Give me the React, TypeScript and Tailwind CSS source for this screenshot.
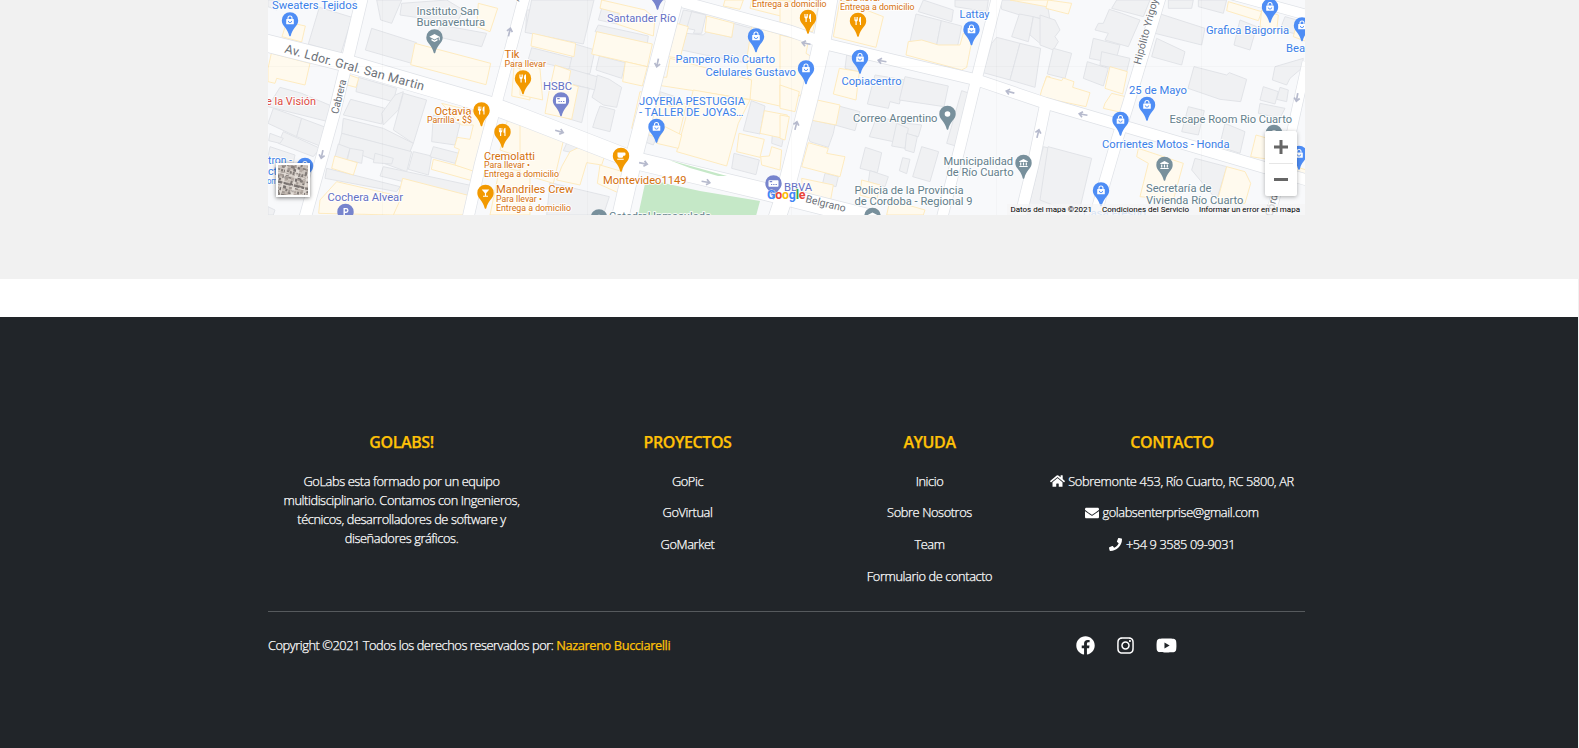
import React from "react";
import { FaHome, FaEnvelope, FaPhone, FaFacebook, FaInstagram, FaYoutube } from "react-icons/fa";

type Tile = { x: number; grey: string[]; yellow: string[] };

// City blocks, in thirds of a pixel from each tile's left edge.
const tiles: Tile[] = [
  {
    x: 260,
    grey: [
      "178,22 276,52 243,160 145,132",
      "24,0 58,0 50,30 24,20",
      "350,0 425,0 395,70 362,60",
      "335,85 470,128 455,190 316,150",
      "425,10 560,0 610,30 590,70 420,45",
      "540,75 680,100 665,140 530,110",
      "60,262 125,280 215,318 205,365 24,320",
      "40,325 125,355 110,410 24,370",
      "125,355 205,385 185,440 110,410",
      "70,395 180,445 160,470 55,430",
      "30,400 70,415 60,430 26,422",
      "30,440 105,465 100,490 24,470",
      "295,232 410,265 400,305 288,275",
      "272,298 375,325 365,372 250,345",
      "405,285 430,275 415,330 370,375 365,340",
      "430,280 500,300 460,430 400,390",
      "250,355 370,385 460,430 450,455 245,400",
      "520,345 600,372 585,435 515,425",
      "245,400 455,455 440,515 235,440",
      "235,432 270,445 260,480 225,470",
      "270,445 310,452 305,490 262,480",
      "345,460 400,475 395,492 340,488",
      "460,455 515,468 505,525 445,508",
      "520,440 597,460 585,490 510,470",
      "200,505 420,560 410,575 195,535",
      "370,500 650,560 640,590 430,545 360,528",
      "24,620 45,630 40,645 24,645",
      "800,30 810,30 810,98 797,95",
    ],
    yellow: [
      "80,66 136,78 125,126 66,110",
      "34,160 150,190 135,255 50,235 45,250 24,245 24,205",
      "465,130 692,190 678,254 452,194",
      "655,10 713,25 690,95 650,80",
      "240,215 296,235 288,262 235,248",
      "762,200 810,215 810,300 755,288",
      "224,468 292,488 280,525 215,505",
      "520,478 660,515 650,546 514,508",
      "545,310 705,350 660,520 585,495 598,448 583,442 592,412 630,418 640,375 604,375",
      "428,535 640,590 625,645 400,645",
      "180,600 230,545 425,590 400,645 176,640",
      "742,362 810,378 810,480 720,450",
      "720,500 810,520 810,645 690,645",
    ],
  },
  {
    x: 520,
    grey: [
      "35,0 222,0 190,132 15,97",
      "245,25 295,40 290,72 235,60",
      "235,75 385,108 382,130 225,95",
      "35,143 160,175 150,208 25,178",
      "165,132 225,150 210,220 145,235 150,195",
      "238,168 316,188 305,235 228,210",
      "145,205 238,232 225,270 140,248",
      "135,250 208,265 185,368 125,350",
      "232,225 268,238 305,262 290,322 250,315 216,292 225,265",
      "240,318 285,330 270,395 218,382 228,350",
      "490,30 555,42 545,92 477,76",
      "558,45 545,100 520,100 525,90 500,85 515,35",
      "640,70 695,85 685,190 555,165 485,150 500,100 550,105 560,95 635,112",
      "420,275 466,290 458,345 415,330",
      "435,330 465,350 460,378 425,370",
      "370,400 410,410 400,435 365,422",
      "694,302 735,318 720,402 670,392",
      "615,352 645,360 638,385 610,378",
      "642,460 718,480 708,524 635,505",
      "757,405 790,415 785,440 755,430",
      "140,430 180,440 165,460 130,452",
      "90,548 268,590 250,645 80,645",
    ],
    yellow: [
      "38,100 167,130 162,170 33,138",
      "245,0 375,30 405,55 400,108 290,72 300,40 240,25",
      "230,95 397,132 382,200 215,162",
      "316,185 382,200 367,258 308,245",
      "105,195 152,212 145,250 175,260 155,358 75,340 88,270",
      "0,185 60,205 68,300 0,285",
      "470,70 505,80 480,175 445,170",
      "560,48 642,70 635,112 555,95",
      "615,0 670,0 660,28 610,18",
      "695,0 810,0 810,55 690,25",
      "695,80 810,110 810,325 690,298 680,180",
      "450,175 695,240 690,298 410,255 415,230 440,232",
      "360,275 420,285 450,320 500,310 470,435 335,385",
      "520,270 690,300 655,370 620,498 470,455",
      "435,380 485,405 475,445 410,430",
      "733,332 802,345 790,415 720,400",
      "657,400 733,418 720,472 650,455",
      "755,440 785,450 780,510 725,495 722,470 748,468",
      "0,375 133,410 100,550 0,520",
      "110,540 125,500 150,455 185,438 255,465 245,495 200,488 180,555",
      "240,495 342,525 325,592 232,550",
    ],
  },
  {
    x: 780,
    grey: [
      "430,0 520,30 515,65 415,35",
      "408,42 484,62 470,135 390,125",
      "484,62 545,78 540,105 530,150 470,135",
      "525,0 625,0 620,35 525,20",
      "660,0 800,0 810,60 720,45 665,28",
      "718,42 760,50 745,125 695,110",
      "650,112 720,130 690,240 610,218 635,130",
      "720,130 782,145 765,262 690,240",
      "760,50 810,65 810,145 780,130 750,105",
      "285,225 375,240 358,312 330,305 325,325 262,312",
      "375,230 505,258 492,320 358,300",
      "545,272 575,282 540,405 535,440 500,430",
      "176,318 240,335 225,392 165,375",
      "85,358 165,375 160,400 145,442 90,425 76,390",
      "290,350 380,370 425,375 415,410 345,395 340,425 268,410",
      "350,370 385,385 375,445 335,438",
      "380,400 412,410 402,458 375,450",
      "256,442 305,458 292,518 240,505",
      "425,440 476,455 450,545 398,530",
      "368,473 390,478 380,521 358,512",
      "135,520 175,530 168,560 128,550",
      "270,512 325,530 315,560 265,545",
      "790,440 810,445 810,645 740,645",
      "200,165 250,180 235,215 195,205",
    ],
    yellow: [
      "180,0 310,50 288,142 160,110",
      "0,0 115,20 98,95 0,75",
      "0,105 85,125 78,160 108,178 80,275 0,320",
      "425,120 475,135 540,135 550,100 578,110 560,202 545,210 378,165 385,125",
      "178,205 238,215 228,300 160,282",
      "75,292 180,315 168,375 66,355",
      "0,255 58,275 45,335 0,325",
      "0,345 28,350 15,420 0,415",
      "85,428 145,445 140,460 195,470 180,530 65,500",
      "65,535 160,555 150,610 70,590",
      "245,540 300,555 290,600 240,585",
      "330,600 435,630 430,645 320,645",
      "800,228 810,230 810,300 780,290",
      "690,0 810,0 810,22",
    ],
  },
  {
    x: 1040,
    grey: [
      "0,45 45,60 60,90 45,110 55,125 40,150 0,135",
      "40,145 95,160 75,235 22,222",
      "208,28 245,40 300,60 265,140 195,120 205,100 165,90 175,70 190,70",
      "230,0 330,0 310,50 215,25",
      "160,115 240,135 225,190 148,175",
      "185,155 270,175 260,215 180,195",
      "142,185 205,205 190,258 130,235",
      "355,40 495,85 485,135 345,100",
      "350,115 435,155 425,195 335,170",
      "385,0 460,0 455,25 385,25",
      "475,0 560,0 550,40 475,20",
      "600,60 650,80 630,150 582,135",
      "462,200 560,225 568,218 620,238 602,305 540,298 444,265",
      "445,320 493,332 475,405 425,395",
      "555,370 615,395 600,460 538,440",
      "670,260 715,275 705,312 660,300",
      "705,200 790,175 785,205 750,235 740,255 697,240",
      "720,262 745,270 740,305 710,298",
      "660,310 735,325 720,355 655,340",
      "465,475 560,500 530,600 455,510",
      "24,440 155,475 115,645 0,600",
      "735,50 790,65 780,105 720,90",
    ],
    yellow: [
      "24,0 95,10 85,42 18,25",
      "565,5 665,35 655,62 560,32",
      "665,30 715,45 710,95 660,80",
      "20,230 65,242 70,234 102,245 98,262 150,278 138,320 52,302 0,290 5,270",
      "210,200 262,215 248,282 195,265",
      "215,280 278,295 265,342 190,325 195,310",
      "648,405 700,420 700,480 632,470",
      "295,445 430,490 400,600 300,590 325,490 290,470",
      "560,500 615,515 632,550 615,610 530,610",
      "765,500 800,510 795,530 760,520",
      "765,90 800,100 800,125 760,110",
    ],
  },
];

// [polyline, width]
const roads: [string, number][] = [
  ["362,-2 348,57 335,110 305,218", 11.5],
  ["524,-2 497,100 480,165 468,218", 11],
  ["675,-2 635,153 620,218", 16.5],
  ["829,-2 821,47 810,95 783,200 777,218", 17],
  ["997,-2 977,77 960,147 942,218", 10.5],
  ["1160,-2 1128,105 1117,140 1101,195 1095,218", 11],
  ["1045,107 1033,165 1020,218", 11],
  ["1307,62 1292,130 1270,218", 9],
  ["683,2 790,31 830,45 977,80 1045,103 1120,125 1307,180", 11],
  ["660,-6 690,4", 9],
  ["1230,-6 1307,15", 10],
  ["266,43 342,62 493,106 525,118 633,160 767,192 870,218", 17],
];

type PinKind = "bag" | "food" | "bank" | "grad" | "cup" | "drink" | "dot" | "card" | "park";
// [x, y, colour, glyph]
const BLUE = "#4e8df5";
const ORANGE = "#f29900";
const SLATE = "#78909c";
const INDIGO = "#7784cd";
const pins: [number, number, string, PinKind][] = [
  [290, 20.5, BLUE, "bag"],
  [434.5, 37.5, SLATE, "grad"],
  [523, 78.5, ORANGE, "food"],
  [481.5, 110.5, ORANGE, "food"],
  [502.5, 132, ORANGE, "food"],
  [485.5, 193, ORANGE, "drink"],
  [305, 166, BLUE, "bag"],
  [345.5, 212, INDIGO, "park"],
  [657.5, -6, INDIGO, "card"],
  [561, 100.5, INDIGO, "card"],
  [656.5, 127, BLUE, "bag"],
  [621, 156, ORANGE, "cup"],
  [756, 36.5, BLUE, "bag"],
  [773.5, 183.5, INDIGO, "card"],
  [808, 18, ORANGE, "food"],
  [858, 21, ORANGE, "food"],
  [806, 68.5, BLUE, "bag"],
  [860, 58, BLUE, "bag"],
  [971.5, 29.5, BLUE, "bag"],
  [947.5, 114, SLATE, "dot"],
  [1023.5, 163, SLATE, "bank"],
  [872.5, 216, SLATE, "grad"],
  [599, 217.5, SLATE, "dot"],
  [1270, 7, BLUE, "bag"],
  [1302, 25.5, BLUE, "bag"],
  [1147, 105, BLUE, "bag"],
  [1120.5, 120, BLUE, "bag"],
  [1101, 190.5, BLUE, "bag"],
  [1164.5, 165, SLATE, "bank"],
  [1274, 133, SLATE, "dot"],
  [1299, 154, BLUE, "bag"],
];

function Glyph({ kind }: { kind: PinKind }) {
  switch (kind) {
    case "bag":
      return (
        <g>
          <rect x="-3.8" y="-1.6" width="7.6" height="5.4" rx="0.6" fill="#fff" />
          <path d="M-2 -1.5v-1a2 2 0 0 1 4 0v1" fill="none" stroke="#fff" strokeWidth="1.1" />
          <path d="M-1.7 .4a1.7 1.7 0 0 0 3.4 0" fill="none" stroke={BLUE} strokeWidth="0.9" />
        </g>
      );
    case "food":
      return (
        <path d="M-3.6-4v3q0 1.3 1.1 1.5V4h1.2V.5Q-.2 .3-.2-1v-3h-.8v2.6h-.5V-4h-.8v2.6h-.5V-4zM3-4.2Q1-4 1-1.500V.8h.9V4h1.100z" fill="#fff" />
      );
    case "cup":
      return (
        <path d="M-3.500-3.500h7q1 0 1 1v1q0 1.200-1.500 1.200H2.300Q2.200 1.700 1 1.700h-2.800Q-3.500 1.700-3.500 0zM-3.800 2.700h6.500v1h-6.500z" fill="#fff" />
      );
    case "drink":
      return <path d="M-3.800-3.600h7.600L.6.200V2.800h1.900v1h-5v-1h1.900V.2z" fill="#fff" />;
    case "grad":
      return <path d="M-5.200-.8 0-3.600l5.200 2.800v3.600h-.9V-.2L0 2zM-3 1.300 0 2.900l3-1.600v1.600L0 4.500-3 2.900z" fill="#fff" />;
    case "bank":
      return <path d="M-4.300-1.700 0-4l4.300 2.300v.7h-8.600zM-3.400-.4h1.200v3h-1.200zM-.6-.4H.6v3H-.6zM2.200-.4h1.200v3H2.200zM-4.200 3.100h8.400v1h-8.400z" fill="#fff" />;
    case "card":
      return (
        <g>
          <rect x="-5" y="-3.300" width="10" height="6.600" rx="0.700" fill="#fff" />
          <path d="M-3.800-1.800h2.500M-2.500 1h1.200M-.3 1h1.300M2 1h1.400" stroke={INDIGO} strokeWidth="1.200" />
        </g>
      );
    case "park":
      return <path d="M-2 4v-8h2.600a2.400 2.400 0 0 1 0 4.900H-.6V4zM-.6-2.700v2.300H.6a1.100 1.100 0 0 0 0-2.300z" fill="#fff" />;
    default:
      return <circle r="2.800" fill="#fff" />;
  }
}

type Label = [number, number, string, string, number, number];
const B = "#3b80e8";
const O = "#d5700d";
const S = "#64808c";
const V = "#6470c4";
// [x, baseline, text, colour, size, width]
const labels: Label[] = [
  [272, 9.300, "Sweaters Tejidos", B, 11, 85.500],
  [416.500, 14.700, "Instituto San", S, 11, 62.500],
  [416.500, 26, "Buenaventura", S, 11, 68.500],
  [504.500, 58.300, "Tik", O, 11, 15],
  [504.500, 67, "Para llevar", O, 8.500, 41.500],
  [434.500, 114.500, "Octavia", O, 11, 37],
  [427, 122.500, "Parrilla • $$", O, 8.500, 45],
  [484, 159.500, "Cremolatti", O, 11, 51],
  [484, 168, "Para llevar •", O, 8.500, 46],
  [484, 177, "Entrega a domicilio", O, 8.500, 75],
  [496, 192.500, "Mandriles Crew", O, 11, 77.500],
  [496, 201.500, "Para llevar •", O, 8.500, 46],
  [496, 210.500, "Entrega a domicilio", O, 8.500, 75],
  [266, 105, "e la Visión", "#dc4b42", 11, 50],
  [268, 163.500, "tron -", B, 11, 24],
  [268, 174.500, "ct", B, 11, 9],
  [267, 184, "om", B, 8.500, 11],
  [327.500, 201, "Cochera Alvear", V, 11, 75.500],
  [607, 22, "Santander Río", V, 11, 69],
  [543, 90, "HSBC", V, 11, 29],
  [675.500, 63, "Pampero Río Cuarto", B, 11, 99.500],
  [705.500, 76, "Celulares Gustavo", B, 11, 90.500],
  [639, 105, "JOYERIA PESTUGGIA", B, 11, 106],
  [639, 116, "- TALLER DE JOYAS…", B, 11, 104.500],
  [603, 183.500, "Montevideo1149", O, 11, 83.500],
  [609, 219.500, "Catedral Inmaculada", S, 11, 102],
  [784, 190.500, "BBVA", V, 11, 28],
  [752, 6.500, "Entrega a domicilio", O, 8.500, 74.500],
  [840, 1, "Para llevar •", O, 8.500, 46],
  [840, 10.200, "Entrega a domicilio", O, 8.500, 74.500],
  [841.500, 84.700, "Copiacentro", B, 11, 60],
  [959.500, 17.500, "Lattay", B, 11, 30],
  [853, 121.500, "Correo Argentino", S, 11, 84.500],
  [943.500, 165, "Municipalidad", S, 11, 69.500],
  [946.500, 176, "de Río Cuarto", S, 11, 67],
  [854.500, 193.700, "Policia de la Provincia", S, 11, 109],
  [854.500, 205, "de Cordoba - Regional 9", S, 11, 118],
  [1206, 33.700, "Grafica Baigorria", B, 11, 83],
  [1286, 52, "Bea", B, 11, 19],
  [1129, 93.700, "25 de Mayo", B, 11, 58],
  [1169.500, 122.500, "Escape Room Rio Cuarto", S, 11, 122.500],
  [1102, 147.500, "Corrientes Motos - Honda", B, 11, 127.500],
  [1146, 192.200, "Secretaría de", S, 11, 65.500],
  [1146, 203.500, "Vivienda Río Cuarto", S, 11, 97.500],
  [1083, 217, "Casa Fresno", "#8fb8f4", 11, 63],
];

// [x, y, rotation]
const arrows: [number, number, number][] = [
  [509.5, 32, -76],
  [322, 154.500, 102],
  [657.500, 63, 102],
  [559.500, 131.500, 16],
  [643.500, 163.500, 12],
  [706, 182, 10],
  [806, 43.500, 190],
  [882, 61, 190],
  [796, 125.500, -76],
  [1010, 92, 194],
  [1038, 133.500, -76],
  [1083, 114.500, 190],
  [1297, 97.500, 100],
];

function CityMap() {
  return (
    <svg className="block h-[215px] w-[1037px]" viewBox="268 0 1037 215" fontFamily="Roboto, sans-serif">
      <rect x="268" width="1037" height="215" fill="#f8f9fb" />
      {tiles.map((t) => (
        <g key={t.x} transform={`translate(${t.x} 0) scale(0.33333)`} strokeWidth="2.800" strokeLinejoin="round">
          {t.grey.map((p) => (
            <polygon key={p} points={p} fill="#f0f1f3" stroke="#e0e2e6" />
          ))}
          {t.yellow.map((p) => (
            <polygon key={p} points={p} fill="#fffaee" stroke="#feeabb" />
          ))}
        </g>
      ))}
      <g fill="none">
        {roads.map(([p, w]) => (
          <polyline key={p} points={p} stroke="#dfe2e7" strokeWidth={w + 1.400} />
        ))}
        {roads.map(([p, w]) => (
          <polyline key={p} points={p} stroke="#fff" strokeWidth={w} />
        ))}
      </g>
      <polygon points="645,183.500 655,180.500 668,184 700,191 760,201 756,216 638,216" fill="#c5e8c7" />
      <polygon points="669,160 727,176 718,176 690,168" fill="#c5e8c7" />
      <path d="M382.500 0V215M587.500 0V215M791.500 0V215M996.500 0V215M1201.500 0V215M268 66.500H1305" stroke="#000" strokeOpacity="0.020" />
      <g stroke="#b6bacd" strokeWidth="1.700" fill="none">
        {arrows.map(([x, y, r]) => (
          <path key={`${x}-${y}`} transform={`translate(${x} ${y}) rotate(${r})`} d="M-4.500 0H3M.5-2.800 3.800 0 .5 2.800" />
        ))}
      </g>
      {pins.map(([x, y, c, k]) => (
        <g key={`${x}-${y}`} transform={`translate(${x} ${y})`}>
          <path d="M0-8.300a8.200 8.200 0 0 1 8.200 8.200C8.200 5.500 2.300 7.500.8 15.200Q0 16.400-.8 15.200C-2.300 7.500-8.200 5.500-8.200-.1A8.200 8.200 0 0 1 0-8.300z" fill={c} />
          <Glyph kind={k} />
        </g>
      ))}
      <g stroke="#fff" strokeOpacity="0.850" strokeWidth="2" paintOrder="stroke" strokeLinejoin="round">
        {labels.map(([x, y, t, c, s, w]) => (
          <text key={`${x}-${y}`} x={x} y={y} fill={c} fontSize={s} textLength={w} lengthAdjust="spacingAndGlyphs">
            {t}
          </text>
        ))}
        <g fill="#6c7178">
          <text transform="translate(284 52.500) rotate(15.300)" fontSize="12.500" textLength="144">Av. Ldor. Gral. San Martin</text>
          <text transform="translate(338 114.500) rotate(-76)" fontSize="10.500" textLength="35">Cabrera</text>
          <text transform="translate(1140.500 65) rotate(-75)" fontSize="10.500" textLength="79">Hipólito Yrigoyen</text>
          <text transform="translate(805 202) rotate(14)" fontSize="10.500" textLength="41">Belgrano</text>
          <text transform="translate(519 2) rotate(-75)" fontSize="10.500">Alvear</text>
          <text transform="translate(1272 217) rotate(-75)" fontSize="10.500">Córdoba</text>
        </g>
      </g>
      <g fontFamily="Roboto, sans-serif" fontWeight="700" fontSize="12.500" stroke="#fff" strokeWidth="0.800" paintOrder="stroke">
        <text y="198.500" textLength="38.500">
          <tspan x="767" fill="#4285f4">G</tspan>
          <tspan fill="#ea4335">o</tspan>
          <tspan fill="#fbbc05">o</tspan>
          <tspan fill="#4285f4">g</tspan>
          <tspan fill="#34a853">l</tspan>
          <tspan fill="#ea4335">e</tspan>
        </text>
      </g>
      <rect x="1007" y="204" width="298" height="11" fill="#f5f5f5" fillOpacity="0.700" />
      <g fontSize="8" fill="#000">
        <text x="1010.500" y="212" textLength="81.500">Datos del mapa ©2021</text>
        <text x="1102" y="212" textLength="87">Condiciones del Servicio</text>
        <text x="1199" y="212" textLength="101">Informar un error en el mapa</text>
      </g>
    </svg>
  );
}

function SatelliteThumb() {
  const cells: React.ReactNode[] = [];
  const shades = ["#c3b9b1", "#a39a94", "#dbd3cc", "#827b77", "#cdc5be", "#b3a9a2", "#e6e0da", "#77716f"];
  for (let r = 0; r < 12; r++)
    for (let c = 0; c < 12; c++)
      cells.push(
        <rect key={`${r}-${c}`} x={c * 3 - 2} y={r * 3 - 2} width={2 + ((r * 5 + c * 3) % 3)} height={1.500 + ((r + c * 7) % 3)} fill={shades[(r * r * 3 + c * 5 + r * c) % 8]} />
      );
  return (
    <svg className="block h-[30px] w-[30px]" viewBox="0 0 30 30">
      <rect width="30" height="30" fill="#d2cac3" />
      <g transform="rotate(14 15 15)">{cells}</g>
      <path d="M9-1 2 31M20-1 13 31M31 3 25 31M-1 7 31 15M-1 18 31 26" stroke="#e2dcd6" strokeWidth="1" />
    </svg>
  );
}

const title = "text-[16px] leading-[19px] font-semibold tracking-[-0.4px] text-[#ffc107]";

function Links({ heading, items }: { heading: string; items: string[] }) {
  return (
    <div className="text-center">
      <h6 className={title}>{heading}</h6>
      <ul className="mt-[19.600px] flex flex-col gap-[12.600px]">
        {items.map((i) => (
          <li key={i}>
            <a href="#">{i}</a>
          </li>
        ))}
      </ul>
    </div>
  );
}

export default function App() {
  return (
    <div className="h-[748px] w-full overflow-hidden bg-[#f1f1f1] pr-px font-['Open_Sans','Noto_Sans',sans-serif]">
      <section className="h-[279px] bg-[#f1f1f1] pl-[268px]">
        <div className="relative h-[215px] w-[1037px] overflow-hidden">
          <CityMap />
          <button className="absolute top-[163px] left-[8px] border-2 border-white shadow-[0_1px_4px_rgba(0,0,0,0.5)]">
            <SatelliteThumb />
          </button>
          <div className="absolute top-[131px] left-[997px] flex h-[65px] w-8 flex-col items-center rounded-[2px] bg-white shadow-[0_1px_4px_rgba(0,0,0,0.3)]">
            <svg className="h-8 w-8" viewBox="0 0 32 32">
              <path d="M9 16H23M16 9V23" stroke="#666" strokeWidth="3" />
            </svg>
            <div className="h-px w-6 bg-[#e6e6e6]" />
            <svg className="h-8 w-8" viewBox="0 0 32 32">
              <path d="M9 15.500H23" stroke="#666" strokeWidth="3" />
            </svg>
          </div>
        </div>
      </section>
      <div className="h-[38px] bg-white" />
      <footer className="h-[431px] bg-[#212529] pt-[116px] pl-[268px] text-[12.800px] leading-[19.200px] font-light tracking-[-0.4px] text-white">
        <div className="grid h-[178px] w-[1037px] grid-cols-[267px_305px_179px_286px] [-webkit-text-stroke:0.25px]">
          <div className="text-center">
            <h6 className={title}>GOLABS!</h6>
            <p className="mt-[19.600px] whitespace-nowrap">
              GoLabs esta formado por un equipo
              <br />
              multidisciplinario. Contamos con Ingenieros,
              <br />
              técnicos, desarrolladores de software y
              <br />
              diseñadores gráficos.
            </p>
          </div>
          <Links heading="PROYECTOS" items={["GoPic", "GoVirtual", "GoMarket"]} />
          <Links heading="AYUDA" items={["Inicio", "Sobre Nosotros", "Team", "Formulario de contacto"]} />
          <div className="pl-5 text-center">
            <h6 className={title}>CONTACTO</h6>
            <div className="mt-[19.600px] flex flex-col gap-[12.600px] whitespace-nowrap">
              <p className="flex items-center justify-center gap-[3px] tracking-[-0.34px]">
                <FaHome className="h-[14px] w-[15px]" />
                Sobremonte 453, Río Cuarto, RC 5800, AR
              </p>
              <p className="flex items-center justify-center gap-[3px]">
                <FaEnvelope className="h-[14px] w-[14px]" />
                golabsenterprise@gmail.com
              </p>
              <p className="flex items-center justify-center gap-1">
                <FaPhone className="h-[13px] w-[13px]" />
                +54 9 3585 09-9031
              </p>
            </div>
          </div>
        </div>
        <div className="h-px w-[1037px] bg-[#565a5d]" />
        <div className="mt-[24px] flex items-center">
          <p className="w-[808px] tracking-[-0.440px] whitespace-nowrap [-webkit-text-stroke:0.25px]">
            Copyright ©2021 Todos los derechos reservados por:{" "}
            <a href="#" className="font-normal tracking-[-0.4px] text-[#ffc107]">
              Nazareno Bucciarelli
            </a>
          </p>
          <div className="flex items-center">
            <FaFacebook className="h-[19px] w-[19px]" />
            <FaInstagram className="ml-[22px] h-[19px] w-[17px]" />
            <FaYoutube className="ml-[22px] h-[19px] w-[21px]" />
          </div>
        </div>
      </footer>
    </div>
  );
}
